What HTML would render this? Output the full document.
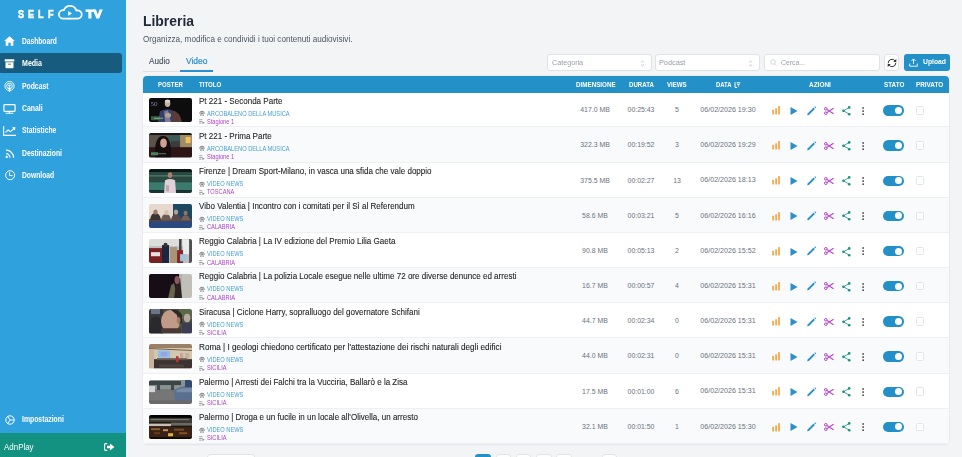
<!DOCTYPE html><html><head><meta charset="utf-8"><style>*{margin:0;padding:0;box-sizing:border-box}
html,body{width:962px;height:457px;overflow:hidden;background:#f3f4f6;font-family:"Liberation Sans",sans-serif;position:relative}
.abs{position:absolute}
.t{position:absolute;white-space:nowrap;line-height:1}
#side{position:absolute;left:0;top:0;width:125.8px;height:457px;background:#2fa1dd}
#foot{position:absolute;left:0;top:433.4px;width:125.8px;height:24px;background:#139282}
.mico{position:absolute;left:4.2px;line-height:0}.mico.w{left:3.3px}.mico.r{left:4.7px}.mico svg{display:block}
#act{position:absolute;left:0;top:53.4px;width:121.7px;height:20.1px;background:#175b7e;border-radius:1px 3px 3px 1px}
#tbl{position:absolute;left:143px;top:76px;width:806px;height:368px;background:#fff;border-radius:4px;box-shadow:0 0 0 0.6px #e3e6ea, 0 1px 2px rgba(0,0,0,0.06);overflow:hidden}
#thead{position:absolute;left:0;top:0;width:806px;height:16.7px;background:#2490c8}
#rows{position:absolute;left:0;top:16.3px;width:806px}
.row{position:absolute;left:0;width:806px;height:35.17px;border-bottom:0.7px solid #eef0f3}
.thumb{position:absolute;left:149.1px;width:43.1px;height:24.3px;border-radius:2px;overflow:hidden;line-height:0}.thumb svg{display:block}
.ic{position:absolute;line-height:0}.ic svg{display:block}
.tog{position:absolute;left:883.3px;width:20.6px;height:10.3px;border-radius:5.2px;background:#2490c8}
.tog i{position:absolute;left:11.6px;top:1.6px;width:7px;height:7px;border-radius:50%;background:#fff}
.chk{position:absolute;left:916.2px;width:7.7px;height:8.5px;border:0.8px solid #e2e5e9;border-radius:1.5px;background:#fff}
.sel{position:absolute;top:54.1px;height:16.5px;background:#fff;border:0.7px solid #dfe2e6;border-radius:3px}
</style></head><body><div id="side"><span class="t" style="left:17.7px;top:9.0px;font-size:11.4px;font-weight:700;color:#fff;transform:scaleX(0.8);transform-origin:0 0;-webkit-text-stroke:0.55px #fff">S</span><span class="t" style="left:28.1px;top:9.0px;font-size:11.4px;font-weight:700;color:#fff;transform:scaleX(0.8);transform-origin:0 0;-webkit-text-stroke:0.55px #fff">E</span><span class="t" style="left:38.2px;top:9.0px;font-size:11.4px;font-weight:700;color:#fff;transform:scaleX(0.8);transform-origin:0 0;-webkit-text-stroke:0.55px #fff">L</span><span class="t" style="left:48.1px;top:9.0px;font-size:11.4px;font-weight:700;color:#fff;transform:scaleX(0.8);transform-origin:0 0;-webkit-text-stroke:0.55px #fff">F</span><svg class="abs" style="left:57px;top:3px" width="27" height="19" viewBox="0 0 27 19"><path d="M20.5 15.6 H5.5 A4.3 4.3 0 1 1 6.9 7.1 A6.6 6.6 0 0 1 19.4 7.6 A4.1 4.1 0 1 1 20.5 15.6 Z" fill="none" stroke="#fff" stroke-width="1.7" stroke-linejoin="round"/><path d="M11.2 8.1 L15 10.4 L11.2 12.7Z" fill="#fff"/><path d="M11.6 14.2 L13.6 15.6 L11.6 17Z" fill="#fff"/></svg><span class="t" style="left:85.9px;top:9.1px;font-size:11.4px;font-weight:700;color:#fff;letter-spacing:-0.2px;transform:scaleX(1.12);transform-origin:0 0;-webkit-text-stroke:1px #fff">TV</span><div id="act"></div><span class="t" style="left:21.90px;top:36.80px;font-size:8.5px;font-weight:700;color:#fff;transform:scaleX(0.7837);transform-origin:0 0;">Dashboard</span><div class="mico" style="top:36.1px"><svg width="11" height="10" viewBox="0 0 11 10"><path d="M5.5 0.3 L10.8 5 L9.3 5 L9.3 9.7 L6.7 9.7 L6.7 6.8 L4.3 6.8 L4.3 9.7 L1.7 9.7 L1.7 5 L0.2 5Z" fill="#fff"/></svg></div><span class="t" style="left:21.90px;top:59.30px;font-size:8.5px;font-weight:700;color:#fff;transform:scaleX(0.8301);transform-origin:0 0;">Media</span><div class="mico" style="top:59.1px"><svg width="11" height="10" viewBox="0 0 11 10"><rect x="0.7" y="0.3" width="9.6" height="2.3" rx=".3" fill="#fff"/><path d="M1.5 3.3 H9.5 V8.6 Q9.5 9.2 8.9 9.2 H2.1 Q1.5 9.2 1.5 8.6Z" fill="#fff"/><rect x="4" y="4.7" width="3" height="0.9" rx=".3" fill="#175b7e"/></svg></div><span class="t" style="left:21.90px;top:81.50px;font-size:8.5px;font-weight:700;color:#fff;transform:scaleX(0.8011);transform-origin:0 0;">Podcast</span><div class="mico" style="top:80.5px"><svg width="11" height="11" viewBox="0 0 11 11"><circle cx="5.5" cy="5" r="4.6" fill="none" stroke="#fff" stroke-width="0.9"/><circle cx="5.5" cy="5" r="2.8" fill="none" stroke="#fff" stroke-width="0.9"/><circle cx="5.5" cy="4.6" r="1.2" fill="#fff"/><path d="M4.5 6.2 H6.5 L6.1 11 H4.9Z" fill="#fff"/></svg></div><span class="t" style="left:21.90px;top:103.90px;font-size:8.5px;font-weight:700;color:#fff;transform:scaleX(0.8073);transform-origin:0 0;">Canali</span><div class="mico w" style="top:103.6px"><svg width="13" height="10" viewBox="0 0 13 10"><rect x="0.9" y="0.7" width="11.2" height="6.6" rx=".8" fill="none" stroke="#fff" stroke-width="1.2"/><path d="M2.6 9.2 H10.4 M6.5 7.4 V9.2" stroke="#fff" stroke-width="1.1"/></svg></div><span class="t" style="left:21.90px;top:126.30px;font-size:8.5px;font-weight:700;color:#fff;transform:scaleX(0.8000);transform-origin:0 0;">Statistiche</span><div class="mico w" style="top:125.5px"><svg width="13" height="10" viewBox="0 0 13 10"><path d="M0.6 0 V9.3 H12.9" fill="none" stroke="#fff" stroke-width="1.15"/><path d="M2.5 6.3 L5.1 4 L7.5 5.6 L11 2.5" fill="none" stroke="#fff" stroke-width="1.1"/><path d="M8.9 1.4 L12.3 1.1 L12.1 4.5Z" fill="#fff"/></svg></div><span class="t" style="left:21.90px;top:148.60px;font-size:8.5px;font-weight:700;color:#fff;transform:scaleX(0.7970);transform-origin:0 0;">Destinazioni</span><div class="mico r" style="top:148.6px"><svg width="11" height="10" viewBox="0 0 11 10"><circle cx="1.7" cy="8" r="1.15" fill="#fff"/><path d="M1 4.7 A3.9 3.9 0 0 1 4.9 8.8 M1 1.2 A7.5 7.5 0 0 1 8.6 8.8" fill="none" stroke="#fff" stroke-width="1.25"/></svg></div><span class="t" style="left:21.90px;top:171.00px;font-size:8.5px;font-weight:700;color:#fff;transform:scaleX(0.7929);transform-origin:0 0;">Download</span><div class="mico r" style="top:169.9px"><svg width="11" height="11" viewBox="0 0 11 11"><circle cx="5.1" cy="5.2" r="4.5" fill="none" stroke="#fff" stroke-width="1"/><path d="M4.6 2.3 V5.6 H7.6" fill="none" stroke="#fff" stroke-width="1"/></svg></div><span class="t" style="left:21.90px;top:414.60px;font-size:8.5px;font-weight:700;color:#fff;transform:scaleX(0.8046);transform-origin:0 0;">Impostazioni</span><div class="mico" style="left:4.6px;top:414.5px"><svg width="11" height="11" viewBox="0 0 11 11"><circle cx="5" cy="5" r="4.2" fill="none" stroke="#fff" stroke-width="1"/><path d="M5 5 H9.2 M5 5 L2.9 1.4 M5 5 L2.9 8.6" stroke="#fff" stroke-width="0.9"/></svg></div></div><div id="foot"><span class="t" style="left:3.90px;top:9.99px;font-size:8.4px;font-weight:400;color:#fff;transform:scaleX(0.9486);transform-origin:0 0;">AdnPlay</span><svg class="abs" style="left:104px;top:10.1px" width="11" height="8" viewBox="0 0 11 8"><path d="M3.2 0.6 H1.4 Q0.6 0.6 0.6 1.4 V6.6 Q0.6 7.4 1.4 7.4 H3.2" fill="none" stroke="#fff" stroke-width="1.1"/><path d="M3 2.8 H6 V0.6 L10.4 4 L6 7.4 V5.2 H3Z" fill="#fff"/></svg></div><span class="t" style="left:142.90px;top:14.17px;font-size:14.8px;font-weight:700;color:#1f2937;transform:scaleX(0.9396);transform-origin:0 0;">Libreria</span><span class="t" style="left:143.00px;top:34.52px;font-size:8.6px;font-weight:400;color:#4b5563;transform:scaleX(0.9472);transform-origin:0 0;">Organizza, modifica e condividi i tuoi contenuti audiovisivi.</span><div class="abs" style="left:143px;top:71px;width:70px;height:0.7px;background:#dcdfe3"></div><span class="t" style="left:148.70px;top:56.69px;font-size:8.4px;font-weight:400;color:#4b5563;transform:scaleX(0.9710);transform-origin:0 0;-webkit-text-stroke:0.15px #4b5563">Audio</span><span class="t" style="left:185.80px;top:56.69px;font-size:8.4px;font-weight:400;color:#2a8fcc;transform:scaleX(1.0103);transform-origin:0 0;-webkit-text-stroke:0.2px #2a8fcc">Video</span><div class="abs" style="left:180px;top:70px;width:33px;height:2px;background:#2a8fcc"></div><div class="sel" style="left:547px;width:105px"><svg class="abs" style="left:92.3px;top:4.6px" width="5" height="7" viewBox="0 0 5 7"><path d="M1 2.4 L2.5 1 L4 2.4 M1 4.6 L2.5 6 L4 4.6" fill="none" stroke="#b0b4ba" stroke-width=".7"/></svg></div><span class="t" style="left:551.60px;top:58.82px;font-size:7.3px;font-weight:400;color:#9aa0a8;transform:scaleX(0.9829);transform-origin:0 0;">Categoria</span><div class="sel" style="left:655px;width:104.5px"><svg class="abs" style="left:92.3px;top:4.6px" width="5" height="7" viewBox="0 0 5 7"><path d="M1 2.4 L2.5 1 L4 2.4 M1 4.6 L2.5 6 L4 4.6" fill="none" stroke="#b0b4ba" stroke-width=".7"/></svg></div><span class="t" style="left:659.00px;top:58.82px;font-size:7.3px;font-weight:400;color:#9aa0a8;">Podcast</span><div class="sel" style="left:764px;width:115.5px"><svg class="abs" style="left:4.5px;top:4.3px" width="7" height="7" viewBox="0 0 7 7"><circle cx="3" cy="3" r="2.3" fill="none" stroke="#c0c4ca" stroke-width=".7"/><path d="M4.7 4.7 L6.5 6.5" stroke="#c0c4ca" stroke-width=".7"/></svg></div><span class="t" style="left:780.60px;top:58.82px;font-size:7.3px;font-weight:400;color:#9aa0a8;transform:scaleX(0.9394);transform-origin:0 0;">Cerca...</span><div class="sel" style="left:883.7px;width:15.6px"><svg class="abs" style="left:2.6px;top:3.4px" width="10" height="10" viewBox="0 0 10 10"><path d="M1.2 5 A3.8 3.8 0 0 1 8.1 2.9 M8.8 5 A3.8 3.8 0 0 1 1.9 7.1" fill="none" stroke="#333" stroke-width="1"/><path d="M9.3 1 L9.3 4.3 L6.3 3.7Z M0.7 9 L0.7 5.7 L3.7 6.3Z" fill="#333"/></svg></div><div class="abs" style="left:904px;top:54.4px;width:46px;height:16.4px;background:#2490c8;border-radius:3px"><svg class="abs" style="left:5px;top:3.6px" width="9" height="9" viewBox="0 0 9 9"><path d="M4.5 6 V1 M2.4 3 L4.5 0.9 L6.6 3 M0.7 5.6 V8.2 H8.3 V5.6" fill="none" stroke="#fff" stroke-width="0.9"/></svg></div><span class="t" style="left:922.70px;top:58.31px;font-size:7.2px;font-weight:700;color:#fff;transform:scaleX(0.9442);transform-origin:0 0;">Upload</span><div id="tbl"><div id="rows"><div class="row" style="top:0.00px;background:#ffffff"></div><div class="row" style="top:35.17px;background:#f8fafc"></div><div class="row" style="top:70.34px;background:#ffffff"></div><div class="row" style="top:105.51px;background:#f8fafc"></div><div class="row" style="top:140.68px;background:#ffffff"></div><div class="row" style="top:175.85px;background:#f8fafc"></div><div class="row" style="top:211.02px;background:#ffffff"></div><div class="row" style="top:246.19px;background:#f8fafc"></div><div class="row" style="top:281.36px;background:#ffffff"></div><div class="row" style="top:316.53px;background:#f8fafc"></div></div><div id="thead"></div></div><span class="t" style="left:158.30px;top:81.54px;font-size:6.8px;font-weight:700;color:#fff;transform:scaleX(0.8872);transform-origin:0 0;">POSTER</span><span class="t" style="left:198.80px;top:81.54px;font-size:6.8px;font-weight:700;color:#fff;transform:scaleX(0.8953);transform-origin:0 0;">TITOLO</span><span class="t" style="left:575.60px;top:81.54px;font-size:6.8px;font-weight:700;color:#fff;transform:scaleX(0.9196);transform-origin:0 0;">DIMENSIONE</span><span class="t" style="left:628.60px;top:81.54px;font-size:6.8px;font-weight:700;color:#fff;transform:scaleX(0.8957);transform-origin:0 0;">DURATA</span><span class="t" style="left:667.00px;top:81.54px;font-size:6.8px;font-weight:700;color:#fff;transform:scaleX(0.8993);transform-origin:0 0;">VIEWS</span><span class="t" style="left:715.50px;top:81.54px;font-size:6.8px;font-weight:700;color:#fff;transform:scaleX(0.8671);transform-origin:0 0;">DATA</span><span class="t" style="left:809.30px;top:81.54px;font-size:6.8px;font-weight:700;color:#fff;transform:scaleX(0.9502);transform-origin:0 0;">AZIONI</span><span class="t" style="left:884.10px;top:81.54px;font-size:6.8px;font-weight:700;color:#fff;transform:scaleX(0.9267);transform-origin:0 0;">STATO</span><span class="t" style="left:916.30px;top:81.54px;font-size:6.8px;font-weight:700;color:#fff;transform:scaleX(0.9349);transform-origin:0 0;">PRIVATO</span><svg class="abs" style="left:733.9px;top:81.9px" width="7" height="6" viewBox="0 0 7 6"><path d="M1 0.2 V5.4 H3.2 M2.6 0.8 H6.3 M3.2 2.4 H5.6 M3.8 4 H5" fill="none" stroke="#fff" stroke-width="1"/></svg><div class="thumb" style="top:98.20px"><svg width="43.1" height="24.3" viewBox="0 0 43 24" preserveAspectRatio="none"><defs><filter id="f0" x="0" y="0" width="1" height="1"><feGaussianBlur stdDeviation="0.5" edgeMode="duplicate"/></filter></defs><g filter="url(#f0)"><rect width="43" height="24" fill="#0a0810"/><text x="1.5" y="8" font-family="Liberation Serif" font-size="7" fill="#8a88a8">50</text><path d="M9 24 L11 13 Q17 10 23 12 L25 24Z" fill="#34406a"/><path d="M15 13 L19 12 L22 24 L16 24Z" fill="#7a7a9a"/><ellipse cx="18.5" cy="5.5" rx="2.8" ry="3.4" fill="#c8b0a0"/><ellipse cx="18.5" cy="3.2" rx="2.8" ry="1.6" fill="#dcd4cc"/><ellipse cx="19" cy="17" rx="3" ry="2.5" fill="#b8a090"/><path d="M23 12 Q31 13 33 24 L23 24Z" fill="#5a3a36"/><rect x="2" y="18" width="9" height="4" fill="#3a6a48" opacity=".9"/><rect x="5" y="19.5" width="9" height="1.2" fill="#b0c8b0" opacity=".6"/></g></svg></div><span class="t" style="left:198.70px;top:96.52px;font-size:8.6px;font-weight:400;color:#1f1f1f;transform:scaleX(0.9350);transform-origin:0 0;-webkit-text-stroke:0.1px #1f1f1f">Pt 221 - Seconda Parte</span><div class="ic" style="left:198.6px;top:110.20px"><svg width="6" height="6" viewBox="0 0 6 6"><path d="M0.4 3.4 A2.6 2.6 0 0 1 5.6 3.4 L5.6 4 L0.4 4Z" fill="#8c8c8c"/><circle cx="1.6" cy="3" r=".55" fill="#fff"/><circle cx="3" cy="2.2" r=".55" fill="#fff"/><circle cx="4.4" cy="3" r=".55" fill="#fff"/><circle cx="1.9" cy="5.1" r=".8" fill="#7a7a7a"/><circle cx="4.1" cy="5.1" r=".8" fill="#7a7a7a"/></svg></div><span class="t" style="left:206.70px;top:110.57px;font-size:6.3px;font-weight:400;color:#469fd4;transform:scaleX(0.9050);transform-origin:0 0;">ARCOBALENO DELLA MUSICA</span><div class="ic" style="left:198.8px;top:119.40px"><svg width="6" height="5" viewBox="0 0 6 5"><rect x="0.2" y="0.3" width="3.2" height="0.9" fill="#9a9a9a"/><rect x="0.2" y="2" width="3.2" height="0.9" fill="#9a9a9a"/><rect x="0.2" y="3.7" width="2.2" height="0.9" fill="#9a9a9a"/><path d="M3.4 2.4 L5.8 3.8 L3.4 5Z" fill="#8a8a8a"/></svg></div><span class="t" style="left:206.80px;top:118.91px;font-size:6.6px;font-weight:400;color:#b043c8;transform:scaleX(0.8600);transform-origin:0 0;">Stagione 1</span><span class="t" style="left:595.10px;top:106.18px;font-size:7.7px;font-weight:400;color:#6b7280;transform:translateX(-50%) scaleX(0.9000);transform-origin:50% 0;">417.0 MB</span><span class="t" style="left:640.70px;top:106.18px;font-size:7.7px;font-weight:400;color:#6b7280;transform:translateX(-50%) scaleX(0.9000);transform-origin:50% 0;">00:25:43</span><span class="t" style="left:676.80px;top:106.18px;font-size:7.7px;font-weight:400;color:#6b7280;transform:translateX(-50%) scaleX(0.9000);transform-origin:50% 0;">5</span><span class="t" style="left:727.50px;top:106.01px;font-size:7.9px;font-weight:400;color:#6b7280;transform:translateX(-50%) scaleX(0.9000);transform-origin:50% 0;">06/02/2026 19:30</span><div class="ic" style="left:772.4px;top:106.10px"><svg width="9" height="9" viewBox="0 0 9 9"><rect x="0.2" y="3.8" width="1.8" height="4.8" rx=".5" fill="#f6a94a"/><rect x="3.2" y="2.2" width="1.8" height="6.4" rx=".5" fill="#f6a94a"/><rect x="6.1" y="0.1" width="1.8" height="8.5" rx=".5" fill="#f6a94a"/></svg></div><div class="ic" style="left:790.2px;top:106.90px"><svg width="8" height="8" viewBox="0 0 8 8"><path d="M0.5 0 L7.5 4 L0.5 8Z" fill="#2a8fcc"/></svg></div><div class="ic" style="left:806.6px;top:105.60px"><svg width="10" height="10" viewBox="0 0 10 10"><path d="M0.2 9.3 L0.6 7.4 L6.6 1.6 L7.9 2.9 L1.9 8.9Z" fill="#2a8fcc"/><path d="M7.3 0.9 L8 0.3 L9.3 1.6 L8.6 2.3Z" fill="#2a8fcc"/></svg></div><div class="ic" style="left:823.8px;top:106.60px"><svg width="10" height="8" viewBox="0 0 10 8"><circle cx="1.8" cy="1.8" r="1.3" fill="none" stroke="#b03cc8" stroke-width="1"/><circle cx="1.8" cy="6.2" r="1.3" fill="none" stroke="#b03cc8" stroke-width="1"/><path d="M2.8 2.4 L9.5 6.8 M2.8 5.6 L9.5 1.2" stroke="#b03cc8" stroke-width="1.1"/></svg></div><div class="ic" style="left:841.7px;top:105.90px"><svg width="9" height="10" viewBox="0 0 9 10"><path d="M7.2 1.5 L1.5 4.8 L7.2 8.1" fill="none" stroke="#1a9080" stroke-width="0.8"/><circle cx="7.2" cy="1.4" r="1.3" fill="#1a9080"/><circle cx="1.4" cy="4.8" r="1.3" fill="#1a9080"/><circle cx="7.2" cy="8.2" r="1.3" fill="#1a9080"/></svg></div><div class="ic" style="left:862px;top:106.70px"><svg width="3" height="9" viewBox="0 0 3 9"><rect x="0.3" y="0.2" width="1.7" height="1.6" fill="#555"/><rect x="0.3" y="3.3" width="1.7" height="1.6" fill="#555"/><rect x="0.3" y="6.4" width="1.7" height="1.6" fill="#555"/></svg></div><div class="tog" style="top:105.30px"><i></i></div><div class="chk" style="top:106.10px"></div><div class="thumb" style="top:133.37px"><svg width="43.1" height="24.3" viewBox="0 0 43 24" preserveAspectRatio="none"><defs><filter id="f1" x="0" y="0" width="1" height="1"><feGaussianBlur stdDeviation="0.5" edgeMode="duplicate"/></filter></defs><g filter="url(#f1)"><rect width="43" height="24" fill="#1e1612"/><rect y="2" width="43" height="13" fill="#5a524a"/><rect x="20" y="2" width="12" height="13" fill="#3a5a54"/><rect x="31" y="2" width="12" height="13" fill="#a08a68"/><rect x="36.5" y="4" width="5" height="6" fill="#f0c060"/><rect x="22" y="8" width="9" height="8" fill="#3a3a3a"/><rect y="14" width="43" height="10" fill="#2e1814"/><path d="M6 24 Q5 3 14 3 Q23 3 22 24Z" fill="#120c0c"/><ellipse cx="14.5" cy="10" rx="3.3" ry="4.5" fill="#d0a090"/><rect x="2" y="19" width="7" height="3" fill="#4a8060"/><rect x="9" y="20" width="8" height="1" fill="#a0c0a0" opacity=".6"/></g></svg></div><span class="t" style="left:198.70px;top:131.69px;font-size:8.6px;font-weight:400;color:#1f1f1f;transform:scaleX(0.9350);transform-origin:0 0;-webkit-text-stroke:0.1px #1f1f1f">Pt 221 - Prima Parte</span><div class="ic" style="left:198.6px;top:145.37px"><svg width="6" height="6" viewBox="0 0 6 6"><path d="M0.4 3.4 A2.6 2.6 0 0 1 5.6 3.4 L5.6 4 L0.4 4Z" fill="#8c8c8c"/><circle cx="1.6" cy="3" r=".55" fill="#fff"/><circle cx="3" cy="2.2" r=".55" fill="#fff"/><circle cx="4.4" cy="3" r=".55" fill="#fff"/><circle cx="1.9" cy="5.1" r=".8" fill="#7a7a7a"/><circle cx="4.1" cy="5.1" r=".8" fill="#7a7a7a"/></svg></div><span class="t" style="left:206.70px;top:145.74px;font-size:6.3px;font-weight:400;color:#469fd4;transform:scaleX(0.9050);transform-origin:0 0;">ARCOBALENO DELLA MUSICA</span><div class="ic" style="left:198.8px;top:154.57px"><svg width="6" height="5" viewBox="0 0 6 5"><rect x="0.2" y="0.3" width="3.2" height="0.9" fill="#9a9a9a"/><rect x="0.2" y="2" width="3.2" height="0.9" fill="#9a9a9a"/><rect x="0.2" y="3.7" width="2.2" height="0.9" fill="#9a9a9a"/><path d="M3.4 2.4 L5.8 3.8 L3.4 5Z" fill="#8a8a8a"/></svg></div><span class="t" style="left:206.80px;top:154.08px;font-size:6.6px;font-weight:400;color:#b043c8;transform:scaleX(0.8600);transform-origin:0 0;">Stagione 1</span><span class="t" style="left:595.10px;top:141.35px;font-size:7.7px;font-weight:400;color:#6b7280;transform:translateX(-50%) scaleX(0.9000);transform-origin:50% 0;">322.3 MB</span><span class="t" style="left:640.70px;top:141.35px;font-size:7.7px;font-weight:400;color:#6b7280;transform:translateX(-50%) scaleX(0.9000);transform-origin:50% 0;">00:19:52</span><span class="t" style="left:676.80px;top:141.35px;font-size:7.7px;font-weight:400;color:#6b7280;transform:translateX(-50%) scaleX(0.9000);transform-origin:50% 0;">3</span><span class="t" style="left:727.50px;top:141.18px;font-size:7.9px;font-weight:400;color:#6b7280;transform:translateX(-50%) scaleX(0.9000);transform-origin:50% 0;">06/02/2026 19:29</span><div class="ic" style="left:772.4px;top:141.27px"><svg width="9" height="9" viewBox="0 0 9 9"><rect x="0.2" y="3.8" width="1.8" height="4.8" rx=".5" fill="#f6a94a"/><rect x="3.2" y="2.2" width="1.8" height="6.4" rx=".5" fill="#f6a94a"/><rect x="6.1" y="0.1" width="1.8" height="8.5" rx=".5" fill="#f6a94a"/></svg></div><div class="ic" style="left:790.2px;top:142.07px"><svg width="8" height="8" viewBox="0 0 8 8"><path d="M0.5 0 L7.5 4 L0.5 8Z" fill="#2a8fcc"/></svg></div><div class="ic" style="left:806.6px;top:140.77px"><svg width="10" height="10" viewBox="0 0 10 10"><path d="M0.2 9.3 L0.6 7.4 L6.6 1.6 L7.9 2.9 L1.9 8.9Z" fill="#2a8fcc"/><path d="M7.3 0.9 L8 0.3 L9.3 1.6 L8.6 2.3Z" fill="#2a8fcc"/></svg></div><div class="ic" style="left:823.8px;top:141.77px"><svg width="10" height="8" viewBox="0 0 10 8"><circle cx="1.8" cy="1.8" r="1.3" fill="none" stroke="#b03cc8" stroke-width="1"/><circle cx="1.8" cy="6.2" r="1.3" fill="none" stroke="#b03cc8" stroke-width="1"/><path d="M2.8 2.4 L9.5 6.8 M2.8 5.6 L9.5 1.2" stroke="#b03cc8" stroke-width="1.1"/></svg></div><div class="ic" style="left:841.7px;top:141.07px"><svg width="9" height="10" viewBox="0 0 9 10"><path d="M7.2 1.5 L1.5 4.8 L7.2 8.1" fill="none" stroke="#1a9080" stroke-width="0.8"/><circle cx="7.2" cy="1.4" r="1.3" fill="#1a9080"/><circle cx="1.4" cy="4.8" r="1.3" fill="#1a9080"/><circle cx="7.2" cy="8.2" r="1.3" fill="#1a9080"/></svg></div><div class="ic" style="left:862px;top:141.87px"><svg width="3" height="9" viewBox="0 0 3 9"><rect x="0.3" y="0.2" width="1.7" height="1.6" fill="#555"/><rect x="0.3" y="3.3" width="1.7" height="1.6" fill="#555"/><rect x="0.3" y="6.4" width="1.7" height="1.6" fill="#555"/></svg></div><div class="tog" style="top:140.47px"><i></i></div><div class="chk" style="top:141.27px"></div><div class="thumb" style="top:168.54px"><svg width="43.1" height="24.3" viewBox="0 0 43 24" preserveAspectRatio="none"><defs><filter id="f2" x="0" y="0" width="1" height="1"><feGaussianBlur stdDeviation="0.5" edgeMode="duplicate"/></filter></defs><g filter="url(#f2)"><rect width="43" height="24" fill="#0e1814"/><rect y="3" width="43" height="10" fill="#2a4a40"/><rect y="6" width="43" height="1.5" fill="#6a8a80" opacity=".6"/><rect y="13" width="43" height="8" fill="#3a7a6c"/><rect y="21" width="43" height="3" fill="#1a3430"/><ellipse cx="21" cy="6" rx="2.3" ry="2.9" fill="#a88070"/><path d="M15 24 L16 11 Q21 9 26 11 L27 24Z" fill="#e0d0d8"/><rect x="17" y="16" width="3" height="6" fill="#a07a80" opacity=".5"/></g></svg></div><span class="t" style="left:198.70px;top:166.86px;font-size:8.6px;font-weight:400;color:#1f1f1f;transform:scaleX(0.9350);transform-origin:0 0;-webkit-text-stroke:0.1px #1f1f1f">Firenze | Dream Sport-Milano, in vasca una sfida che vale doppio</span><div class="ic" style="left:198.6px;top:180.54px"><svg width="6" height="6" viewBox="0 0 6 6"><path d="M0.4 3.4 A2.6 2.6 0 0 1 5.6 3.4 L5.6 4 L0.4 4Z" fill="#8c8c8c"/><circle cx="1.6" cy="3" r=".55" fill="#fff"/><circle cx="3" cy="2.2" r=".55" fill="#fff"/><circle cx="4.4" cy="3" r=".55" fill="#fff"/><circle cx="1.9" cy="5.1" r=".8" fill="#7a7a7a"/><circle cx="4.1" cy="5.1" r=".8" fill="#7a7a7a"/></svg></div><span class="t" style="left:206.70px;top:180.91px;font-size:6.3px;font-weight:400;color:#469fd4;transform:scaleX(0.9050);transform-origin:0 0;">VIDEO NEWS</span><div class="ic" style="left:198.8px;top:189.74px"><svg width="6" height="5" viewBox="0 0 6 5"><rect x="0.2" y="0.3" width="3.2" height="0.9" fill="#9a9a9a"/><rect x="0.2" y="2" width="3.2" height="0.9" fill="#9a9a9a"/><rect x="0.2" y="3.7" width="2.2" height="0.9" fill="#9a9a9a"/><path d="M3.4 2.4 L5.8 3.8 L3.4 5Z" fill="#8a8a8a"/></svg></div><span class="t" style="left:206.80px;top:189.25px;font-size:6.6px;font-weight:400;color:#b043c8;transform:scaleX(0.8600);transform-origin:0 0;">TOSCANA</span><span class="t" style="left:595.10px;top:176.52px;font-size:7.7px;font-weight:400;color:#6b7280;transform:translateX(-50%) scaleX(0.9000);transform-origin:50% 0;">375.5 MB</span><span class="t" style="left:640.70px;top:176.52px;font-size:7.7px;font-weight:400;color:#6b7280;transform:translateX(-50%) scaleX(0.9000);transform-origin:50% 0;">00:02:27</span><span class="t" style="left:676.80px;top:176.52px;font-size:7.7px;font-weight:400;color:#6b7280;transform:translateX(-50%) scaleX(0.9000);transform-origin:50% 0;">13</span><span class="t" style="left:727.50px;top:176.35px;font-size:7.9px;font-weight:400;color:#6b7280;transform:translateX(-50%) scaleX(0.9000);transform-origin:50% 0;">06/02/2026 18:13</span><div class="ic" style="left:772.4px;top:176.44px"><svg width="9" height="9" viewBox="0 0 9 9"><rect x="0.2" y="3.8" width="1.8" height="4.8" rx=".5" fill="#f6a94a"/><rect x="3.2" y="2.2" width="1.8" height="6.4" rx=".5" fill="#f6a94a"/><rect x="6.1" y="0.1" width="1.8" height="8.5" rx=".5" fill="#f6a94a"/></svg></div><div class="ic" style="left:790.2px;top:177.24px"><svg width="8" height="8" viewBox="0 0 8 8"><path d="M0.5 0 L7.5 4 L0.5 8Z" fill="#2a8fcc"/></svg></div><div class="ic" style="left:806.6px;top:175.94px"><svg width="10" height="10" viewBox="0 0 10 10"><path d="M0.2 9.3 L0.6 7.4 L6.6 1.6 L7.9 2.9 L1.9 8.9Z" fill="#2a8fcc"/><path d="M7.3 0.9 L8 0.3 L9.3 1.6 L8.6 2.3Z" fill="#2a8fcc"/></svg></div><div class="ic" style="left:823.8px;top:176.94px"><svg width="10" height="8" viewBox="0 0 10 8"><circle cx="1.8" cy="1.8" r="1.3" fill="none" stroke="#b03cc8" stroke-width="1"/><circle cx="1.8" cy="6.2" r="1.3" fill="none" stroke="#b03cc8" stroke-width="1"/><path d="M2.8 2.4 L9.5 6.8 M2.8 5.6 L9.5 1.2" stroke="#b03cc8" stroke-width="1.1"/></svg></div><div class="ic" style="left:841.7px;top:176.24px"><svg width="9" height="10" viewBox="0 0 9 10"><path d="M7.2 1.5 L1.5 4.8 L7.2 8.1" fill="none" stroke="#1a9080" stroke-width="0.8"/><circle cx="7.2" cy="1.4" r="1.3" fill="#1a9080"/><circle cx="1.4" cy="4.8" r="1.3" fill="#1a9080"/><circle cx="7.2" cy="8.2" r="1.3" fill="#1a9080"/></svg></div><div class="ic" style="left:862px;top:177.04px"><svg width="3" height="9" viewBox="0 0 3 9"><rect x="0.3" y="0.2" width="1.7" height="1.6" fill="#555"/><rect x="0.3" y="3.3" width="1.7" height="1.6" fill="#555"/><rect x="0.3" y="6.4" width="1.7" height="1.6" fill="#555"/></svg></div><div class="tog" style="top:175.64px"><i></i></div><div class="chk" style="top:176.44px"></div><div class="thumb" style="top:203.71px"><svg width="43.1" height="24.3" viewBox="0 0 43 24" preserveAspectRatio="none"><defs><filter id="f3" x="0" y="0" width="1" height="1"><feGaussianBlur stdDeviation="0.5" edgeMode="duplicate"/></filter></defs><g filter="url(#f3)"><rect width="43" height="24" fill="#e6d8cc"/><rect x="24" width="19" height="16" fill="#1a4860"/><rect y="16" width="43" height="8" fill="#2a4a80"/><rect y="15" width="43" height="2" fill="#6a4a3a"/><path d="M1 16 Q2 9 6 9 Q11 9 12 16Z" fill="#3a3030"/><ellipse cx="6.5" cy="8" rx="2.2" ry="2.6" fill="#9a7a6a"/><path d="M12 16 Q13 10 17 10 Q21 10 22 16Z" fill="#6a5a50"/><ellipse cx="17.5" cy="8.5" rx="2.2" ry="2.6" fill="#d8c0b0"/><path d="M22 16 Q23 10 27 10 Q31 10 32 16Z" fill="#5a4a48"/><ellipse cx="27" cy="8" rx="2.2" ry="2.6" fill="#b0a098"/><path d="M32 16 Q33 11 36.5 11 Q40 11 41 16Z" fill="#7a6058"/><ellipse cx="36.5" cy="9" rx="2" ry="2.4" fill="#9a7060"/></g></svg></div><span class="t" style="left:198.70px;top:202.03px;font-size:8.6px;font-weight:400;color:#1f1f1f;transform:scaleX(0.9350);transform-origin:0 0;-webkit-text-stroke:0.1px #1f1f1f">Vibo Valentia | Incontro con i comitati per il Sì al Referendum</span><div class="ic" style="left:198.6px;top:215.71px"><svg width="6" height="6" viewBox="0 0 6 6"><path d="M0.4 3.4 A2.6 2.6 0 0 1 5.6 3.4 L5.6 4 L0.4 4Z" fill="#8c8c8c"/><circle cx="1.6" cy="3" r=".55" fill="#fff"/><circle cx="3" cy="2.2" r=".55" fill="#fff"/><circle cx="4.4" cy="3" r=".55" fill="#fff"/><circle cx="1.9" cy="5.1" r=".8" fill="#7a7a7a"/><circle cx="4.1" cy="5.1" r=".8" fill="#7a7a7a"/></svg></div><span class="t" style="left:206.70px;top:216.08px;font-size:6.3px;font-weight:400;color:#469fd4;transform:scaleX(0.9050);transform-origin:0 0;">VIDEO NEWS</span><div class="ic" style="left:198.8px;top:224.91px"><svg width="6" height="5" viewBox="0 0 6 5"><rect x="0.2" y="0.3" width="3.2" height="0.9" fill="#9a9a9a"/><rect x="0.2" y="2" width="3.2" height="0.9" fill="#9a9a9a"/><rect x="0.2" y="3.7" width="2.2" height="0.9" fill="#9a9a9a"/><path d="M3.4 2.4 L5.8 3.8 L3.4 5Z" fill="#8a8a8a"/></svg></div><span class="t" style="left:206.80px;top:224.42px;font-size:6.6px;font-weight:400;color:#b043c8;transform:scaleX(0.8600);transform-origin:0 0;">CALABRIA</span><span class="t" style="left:595.10px;top:211.69px;font-size:7.7px;font-weight:400;color:#6b7280;transform:translateX(-50%) scaleX(0.9000);transform-origin:50% 0;">58.6 MB</span><span class="t" style="left:640.70px;top:211.69px;font-size:7.7px;font-weight:400;color:#6b7280;transform:translateX(-50%) scaleX(0.9000);transform-origin:50% 0;">00:03:21</span><span class="t" style="left:676.80px;top:211.69px;font-size:7.7px;font-weight:400;color:#6b7280;transform:translateX(-50%) scaleX(0.9000);transform-origin:50% 0;">5</span><span class="t" style="left:727.50px;top:211.52px;font-size:7.9px;font-weight:400;color:#6b7280;transform:translateX(-50%) scaleX(0.9000);transform-origin:50% 0;">06/02/2026 16:16</span><div class="ic" style="left:772.4px;top:211.61px"><svg width="9" height="9" viewBox="0 0 9 9"><rect x="0.2" y="3.8" width="1.8" height="4.8" rx=".5" fill="#f6a94a"/><rect x="3.2" y="2.2" width="1.8" height="6.4" rx=".5" fill="#f6a94a"/><rect x="6.1" y="0.1" width="1.8" height="8.5" rx=".5" fill="#f6a94a"/></svg></div><div class="ic" style="left:790.2px;top:212.41px"><svg width="8" height="8" viewBox="0 0 8 8"><path d="M0.5 0 L7.5 4 L0.5 8Z" fill="#2a8fcc"/></svg></div><div class="ic" style="left:806.6px;top:211.11px"><svg width="10" height="10" viewBox="0 0 10 10"><path d="M0.2 9.3 L0.6 7.4 L6.6 1.6 L7.9 2.9 L1.9 8.9Z" fill="#2a8fcc"/><path d="M7.3 0.9 L8 0.3 L9.3 1.6 L8.6 2.3Z" fill="#2a8fcc"/></svg></div><div class="ic" style="left:823.8px;top:212.11px"><svg width="10" height="8" viewBox="0 0 10 8"><circle cx="1.8" cy="1.8" r="1.3" fill="none" stroke="#b03cc8" stroke-width="1"/><circle cx="1.8" cy="6.2" r="1.3" fill="none" stroke="#b03cc8" stroke-width="1"/><path d="M2.8 2.4 L9.5 6.8 M2.8 5.6 L9.5 1.2" stroke="#b03cc8" stroke-width="1.1"/></svg></div><div class="ic" style="left:841.7px;top:211.41px"><svg width="9" height="10" viewBox="0 0 9 10"><path d="M7.2 1.5 L1.5 4.8 L7.2 8.1" fill="none" stroke="#1a9080" stroke-width="0.8"/><circle cx="7.2" cy="1.4" r="1.3" fill="#1a9080"/><circle cx="1.4" cy="4.8" r="1.3" fill="#1a9080"/><circle cx="7.2" cy="8.2" r="1.3" fill="#1a9080"/></svg></div><div class="ic" style="left:862px;top:212.21px"><svg width="3" height="9" viewBox="0 0 3 9"><rect x="0.3" y="0.2" width="1.7" height="1.6" fill="#555"/><rect x="0.3" y="3.3" width="1.7" height="1.6" fill="#555"/><rect x="0.3" y="6.4" width="1.7" height="1.6" fill="#555"/></svg></div><div class="tog" style="top:210.81px"><i></i></div><div class="chk" style="top:211.61px"></div><div class="thumb" style="top:238.88px"><svg width="43.1" height="24.3" viewBox="0 0 43 24" preserveAspectRatio="none"><defs><filter id="f4" x="0" y="0" width="1" height="1"><feGaussianBlur stdDeviation="0.5" edgeMode="duplicate"/></filter></defs><g filter="url(#f4)"><rect width="43" height="24" fill="#c0c0c0"/><rect width="43" height="7" fill="#dcdedc"/><rect x="30" y="0" width="2.5" height="24" fill="#404040"/><rect x="34" y="1" width="8" height="14" fill="#e8ecea"/><rect x="40" y="0" width="3" height="24" fill="#505050"/><rect y="9" width="14" height="15" fill="#7a2024"/><rect x="2" y="13" width="9" height="4" fill="#e8e0e0"/><rect x="22" y="11" width="12" height="13" fill="#8a2828"/><rect x="13" y="6" width="7" height="18" fill="#1a2640"/><ellipse cx="16.5" cy="6" rx="2" ry="2.4" fill="#3a3030"/><rect x="21" y="8" width="7" height="16" fill="#a89478"/><rect x="31" y="15" width="6" height="7" fill="#a0c4dc"/></g></svg></div><span class="t" style="left:198.70px;top:237.20px;font-size:8.6px;font-weight:400;color:#1f1f1f;transform:scaleX(0.9350);transform-origin:0 0;-webkit-text-stroke:0.1px #1f1f1f">Reggio Calabria | La IV edizione del Premio Lilia Gaeta</span><div class="ic" style="left:198.6px;top:250.88px"><svg width="6" height="6" viewBox="0 0 6 6"><path d="M0.4 3.4 A2.6 2.6 0 0 1 5.6 3.4 L5.6 4 L0.4 4Z" fill="#8c8c8c"/><circle cx="1.6" cy="3" r=".55" fill="#fff"/><circle cx="3" cy="2.2" r=".55" fill="#fff"/><circle cx="4.4" cy="3" r=".55" fill="#fff"/><circle cx="1.9" cy="5.1" r=".8" fill="#7a7a7a"/><circle cx="4.1" cy="5.1" r=".8" fill="#7a7a7a"/></svg></div><span class="t" style="left:206.70px;top:251.25px;font-size:6.3px;font-weight:400;color:#469fd4;transform:scaleX(0.9050);transform-origin:0 0;">VIDEO NEWS</span><div class="ic" style="left:198.8px;top:260.08px"><svg width="6" height="5" viewBox="0 0 6 5"><rect x="0.2" y="0.3" width="3.2" height="0.9" fill="#9a9a9a"/><rect x="0.2" y="2" width="3.2" height="0.9" fill="#9a9a9a"/><rect x="0.2" y="3.7" width="2.2" height="0.9" fill="#9a9a9a"/><path d="M3.4 2.4 L5.8 3.8 L3.4 5Z" fill="#8a8a8a"/></svg></div><span class="t" style="left:206.80px;top:259.59px;font-size:6.6px;font-weight:400;color:#b043c8;transform:scaleX(0.8600);transform-origin:0 0;">CALABRIA</span><span class="t" style="left:595.10px;top:246.86px;font-size:7.7px;font-weight:400;color:#6b7280;transform:translateX(-50%) scaleX(0.9000);transform-origin:50% 0;">90.8 MB</span><span class="t" style="left:640.70px;top:246.86px;font-size:7.7px;font-weight:400;color:#6b7280;transform:translateX(-50%) scaleX(0.9000);transform-origin:50% 0;">00:05:13</span><span class="t" style="left:676.80px;top:246.86px;font-size:7.7px;font-weight:400;color:#6b7280;transform:translateX(-50%) scaleX(0.9000);transform-origin:50% 0;">2</span><span class="t" style="left:727.50px;top:246.69px;font-size:7.9px;font-weight:400;color:#6b7280;transform:translateX(-50%) scaleX(0.9000);transform-origin:50% 0;">06/02/2026 15:52</span><div class="ic" style="left:772.4px;top:246.78px"><svg width="9" height="9" viewBox="0 0 9 9"><rect x="0.2" y="3.8" width="1.8" height="4.8" rx=".5" fill="#f6a94a"/><rect x="3.2" y="2.2" width="1.8" height="6.4" rx=".5" fill="#f6a94a"/><rect x="6.1" y="0.1" width="1.8" height="8.5" rx=".5" fill="#f6a94a"/></svg></div><div class="ic" style="left:790.2px;top:247.58px"><svg width="8" height="8" viewBox="0 0 8 8"><path d="M0.5 0 L7.5 4 L0.5 8Z" fill="#2a8fcc"/></svg></div><div class="ic" style="left:806.6px;top:246.28px"><svg width="10" height="10" viewBox="0 0 10 10"><path d="M0.2 9.3 L0.6 7.4 L6.6 1.6 L7.9 2.9 L1.9 8.9Z" fill="#2a8fcc"/><path d="M7.3 0.9 L8 0.3 L9.3 1.6 L8.6 2.3Z" fill="#2a8fcc"/></svg></div><div class="ic" style="left:823.8px;top:247.28px"><svg width="10" height="8" viewBox="0 0 10 8"><circle cx="1.8" cy="1.8" r="1.3" fill="none" stroke="#b03cc8" stroke-width="1"/><circle cx="1.8" cy="6.2" r="1.3" fill="none" stroke="#b03cc8" stroke-width="1"/><path d="M2.8 2.4 L9.5 6.8 M2.8 5.6 L9.5 1.2" stroke="#b03cc8" stroke-width="1.1"/></svg></div><div class="ic" style="left:841.7px;top:246.58px"><svg width="9" height="10" viewBox="0 0 9 10"><path d="M7.2 1.5 L1.5 4.8 L7.2 8.1" fill="none" stroke="#1a9080" stroke-width="0.8"/><circle cx="7.2" cy="1.4" r="1.3" fill="#1a9080"/><circle cx="1.4" cy="4.8" r="1.3" fill="#1a9080"/><circle cx="7.2" cy="8.2" r="1.3" fill="#1a9080"/></svg></div><div class="ic" style="left:862px;top:247.38px"><svg width="3" height="9" viewBox="0 0 3 9"><rect x="0.3" y="0.2" width="1.7" height="1.6" fill="#555"/><rect x="0.3" y="3.3" width="1.7" height="1.6" fill="#555"/><rect x="0.3" y="6.4" width="1.7" height="1.6" fill="#555"/></svg></div><div class="tog" style="top:245.98px"><i></i></div><div class="chk" style="top:246.78px"></div><div class="thumb" style="top:274.05px"><svg width="43.1" height="24.3" viewBox="0 0 43 24" preserveAspectRatio="none"><defs><filter id="f5" x="0" y="0" width="1" height="1"><feGaussianBlur stdDeviation="0.5" edgeMode="duplicate"/></filter></defs><g filter="url(#f5)"><rect width="43" height="24" fill="#121018"/><rect x="30" width="13" height="24" fill="#b4b4ac"/><rect x="33" width="10" height="24" fill="#c8c8c0" opacity=".6"/><path d="M19 24 L22 11 L25 9 L29 24Z" fill="#6a6450"/><path d="M25 24 L27 8 L31 4 L33 24Z" fill="#2a2420"/><ellipse cx="28" cy="6" rx="2.5" ry="4" fill="#8a5a60"/></g></svg></div><span class="t" style="left:198.70px;top:272.37px;font-size:8.6px;font-weight:400;color:#1f1f1f;transform:scaleX(0.9350);transform-origin:0 0;-webkit-text-stroke:0.1px #1f1f1f">Reggio Calabria | La polizia Locale esegue nelle ultime 72 ore diverse denunce ed arresti</span><div class="ic" style="left:198.6px;top:286.05px"><svg width="6" height="6" viewBox="0 0 6 6"><path d="M0.4 3.4 A2.6 2.6 0 0 1 5.6 3.4 L5.6 4 L0.4 4Z" fill="#8c8c8c"/><circle cx="1.6" cy="3" r=".55" fill="#fff"/><circle cx="3" cy="2.2" r=".55" fill="#fff"/><circle cx="4.4" cy="3" r=".55" fill="#fff"/><circle cx="1.9" cy="5.1" r=".8" fill="#7a7a7a"/><circle cx="4.1" cy="5.1" r=".8" fill="#7a7a7a"/></svg></div><span class="t" style="left:206.70px;top:286.42px;font-size:6.3px;font-weight:400;color:#469fd4;transform:scaleX(0.9050);transform-origin:0 0;">VIDEO NEWS</span><div class="ic" style="left:198.8px;top:295.25px"><svg width="6" height="5" viewBox="0 0 6 5"><rect x="0.2" y="0.3" width="3.2" height="0.9" fill="#9a9a9a"/><rect x="0.2" y="2" width="3.2" height="0.9" fill="#9a9a9a"/><rect x="0.2" y="3.7" width="2.2" height="0.9" fill="#9a9a9a"/><path d="M3.4 2.4 L5.8 3.8 L3.4 5Z" fill="#8a8a8a"/></svg></div><span class="t" style="left:206.80px;top:294.76px;font-size:6.6px;font-weight:400;color:#b043c8;transform:scaleX(0.8600);transform-origin:0 0;">CALABRIA</span><span class="t" style="left:595.10px;top:282.03px;font-size:7.7px;font-weight:400;color:#6b7280;transform:translateX(-50%) scaleX(0.9000);transform-origin:50% 0;">16.7 MB</span><span class="t" style="left:640.70px;top:282.03px;font-size:7.7px;font-weight:400;color:#6b7280;transform:translateX(-50%) scaleX(0.9000);transform-origin:50% 0;">00:00:57</span><span class="t" style="left:676.80px;top:282.03px;font-size:7.7px;font-weight:400;color:#6b7280;transform:translateX(-50%) scaleX(0.9000);transform-origin:50% 0;">4</span><span class="t" style="left:727.50px;top:281.86px;font-size:7.9px;font-weight:400;color:#6b7280;transform:translateX(-50%) scaleX(0.9000);transform-origin:50% 0;">06/02/2026 15:31</span><div class="ic" style="left:772.4px;top:281.95px"><svg width="9" height="9" viewBox="0 0 9 9"><rect x="0.2" y="3.8" width="1.8" height="4.8" rx=".5" fill="#f6a94a"/><rect x="3.2" y="2.2" width="1.8" height="6.4" rx=".5" fill="#f6a94a"/><rect x="6.1" y="0.1" width="1.8" height="8.5" rx=".5" fill="#f6a94a"/></svg></div><div class="ic" style="left:790.2px;top:282.75px"><svg width="8" height="8" viewBox="0 0 8 8"><path d="M0.5 0 L7.5 4 L0.5 8Z" fill="#2a8fcc"/></svg></div><div class="ic" style="left:806.6px;top:281.45px"><svg width="10" height="10" viewBox="0 0 10 10"><path d="M0.2 9.3 L0.6 7.4 L6.6 1.6 L7.9 2.9 L1.9 8.9Z" fill="#2a8fcc"/><path d="M7.3 0.9 L8 0.3 L9.3 1.6 L8.6 2.3Z" fill="#2a8fcc"/></svg></div><div class="ic" style="left:823.8px;top:282.45px"><svg width="10" height="8" viewBox="0 0 10 8"><circle cx="1.8" cy="1.8" r="1.3" fill="none" stroke="#b03cc8" stroke-width="1"/><circle cx="1.8" cy="6.2" r="1.3" fill="none" stroke="#b03cc8" stroke-width="1"/><path d="M2.8 2.4 L9.5 6.8 M2.8 5.6 L9.5 1.2" stroke="#b03cc8" stroke-width="1.1"/></svg></div><div class="ic" style="left:841.7px;top:281.75px"><svg width="9" height="10" viewBox="0 0 9 10"><path d="M7.2 1.5 L1.5 4.8 L7.2 8.1" fill="none" stroke="#1a9080" stroke-width="0.8"/><circle cx="7.2" cy="1.4" r="1.3" fill="#1a9080"/><circle cx="1.4" cy="4.8" r="1.3" fill="#1a9080"/><circle cx="7.2" cy="8.2" r="1.3" fill="#1a9080"/></svg></div><div class="ic" style="left:862px;top:282.55px"><svg width="3" height="9" viewBox="0 0 3 9"><rect x="0.3" y="0.2" width="1.7" height="1.6" fill="#555"/><rect x="0.3" y="3.3" width="1.7" height="1.6" fill="#555"/><rect x="0.3" y="6.4" width="1.7" height="1.6" fill="#555"/></svg></div><div class="tog" style="top:281.15px"><i></i></div><div class="chk" style="top:281.95px"></div><div class="thumb" style="top:309.22px"><svg width="43.1" height="24.3" viewBox="0 0 43 24" preserveAspectRatio="none"><defs><filter id="f6" x="0" y="0" width="1" height="1"><feGaussianBlur stdDeviation="0.5" edgeMode="duplicate"/></filter></defs><g filter="url(#f6)"><rect width="43" height="24" fill="#4a5040"/><rect x="0" width="14" height="24" fill="#34343a"/><rect x="2" y="0" width="9" height="5" fill="#6a7488"/><path d="M0 24 L2 10 Q6 6 11 9 L14 24Z" fill="#2a2a2e"/><rect x="30" width="13" height="10" fill="#5a6a4a"/><ellipse cx="21.5" cy="12" rx="9.5" ry="11" fill="#c29a88"/><path d="M22 1 Q30 0 33 6 L33 14 L29 14 L28 6Z" fill="#2e2a28"/><ellipse cx="29.5" cy="11" rx="1.8" ry="3" fill="#a87868"/><rect x="12" y="19" width="20" height="5" fill="#4a3834"/><ellipse cx="38" cy="9" rx="3.2" ry="4.2" fill="#b8a8a4"/><rect x="33" y="14" width="10" height="10" fill="#3a3e52"/></g></svg></div><span class="t" style="left:198.70px;top:307.54px;font-size:8.6px;font-weight:400;color:#1f1f1f;transform:scaleX(0.9350);transform-origin:0 0;-webkit-text-stroke:0.1px #1f1f1f">Siracusa | Ciclone Harry, sopralluogo del governatore Schifani</span><div class="ic" style="left:198.6px;top:321.22px"><svg width="6" height="6" viewBox="0 0 6 6"><path d="M0.4 3.4 A2.6 2.6 0 0 1 5.6 3.4 L5.6 4 L0.4 4Z" fill="#8c8c8c"/><circle cx="1.6" cy="3" r=".55" fill="#fff"/><circle cx="3" cy="2.2" r=".55" fill="#fff"/><circle cx="4.4" cy="3" r=".55" fill="#fff"/><circle cx="1.9" cy="5.1" r=".8" fill="#7a7a7a"/><circle cx="4.1" cy="5.1" r=".8" fill="#7a7a7a"/></svg></div><span class="t" style="left:206.70px;top:321.59px;font-size:6.3px;font-weight:400;color:#469fd4;transform:scaleX(0.9050);transform-origin:0 0;">VIDEO NEWS</span><div class="ic" style="left:198.8px;top:330.42px"><svg width="6" height="5" viewBox="0 0 6 5"><rect x="0.2" y="0.3" width="3.2" height="0.9" fill="#9a9a9a"/><rect x="0.2" y="2" width="3.2" height="0.9" fill="#9a9a9a"/><rect x="0.2" y="3.7" width="2.2" height="0.9" fill="#9a9a9a"/><path d="M3.4 2.4 L5.8 3.8 L3.4 5Z" fill="#8a8a8a"/></svg></div><span class="t" style="left:206.80px;top:329.93px;font-size:6.6px;font-weight:400;color:#b043c8;transform:scaleX(0.8600);transform-origin:0 0;">SICILIA</span><span class="t" style="left:595.10px;top:317.20px;font-size:7.7px;font-weight:400;color:#6b7280;transform:translateX(-50%) scaleX(0.9000);transform-origin:50% 0;">44.7 MB</span><span class="t" style="left:640.70px;top:317.20px;font-size:7.7px;font-weight:400;color:#6b7280;transform:translateX(-50%) scaleX(0.9000);transform-origin:50% 0;">00:02:34</span><span class="t" style="left:676.80px;top:317.20px;font-size:7.7px;font-weight:400;color:#6b7280;transform:translateX(-50%) scaleX(0.9000);transform-origin:50% 0;">0</span><span class="t" style="left:727.50px;top:317.03px;font-size:7.9px;font-weight:400;color:#6b7280;transform:translateX(-50%) scaleX(0.9000);transform-origin:50% 0;">06/02/2026 15:31</span><div class="ic" style="left:772.4px;top:317.12px"><svg width="9" height="9" viewBox="0 0 9 9"><rect x="0.2" y="3.8" width="1.8" height="4.8" rx=".5" fill="#f6a94a"/><rect x="3.2" y="2.2" width="1.8" height="6.4" rx=".5" fill="#f6a94a"/><rect x="6.1" y="0.1" width="1.8" height="8.5" rx=".5" fill="#f6a94a"/></svg></div><div class="ic" style="left:790.2px;top:317.92px"><svg width="8" height="8" viewBox="0 0 8 8"><path d="M0.5 0 L7.5 4 L0.5 8Z" fill="#2a8fcc"/></svg></div><div class="ic" style="left:806.6px;top:316.62px"><svg width="10" height="10" viewBox="0 0 10 10"><path d="M0.2 9.3 L0.6 7.4 L6.6 1.6 L7.9 2.9 L1.9 8.9Z" fill="#2a8fcc"/><path d="M7.3 0.9 L8 0.3 L9.3 1.6 L8.6 2.3Z" fill="#2a8fcc"/></svg></div><div class="ic" style="left:823.8px;top:317.62px"><svg width="10" height="8" viewBox="0 0 10 8"><circle cx="1.8" cy="1.8" r="1.3" fill="none" stroke="#b03cc8" stroke-width="1"/><circle cx="1.8" cy="6.2" r="1.3" fill="none" stroke="#b03cc8" stroke-width="1"/><path d="M2.8 2.4 L9.5 6.8 M2.8 5.6 L9.5 1.2" stroke="#b03cc8" stroke-width="1.1"/></svg></div><div class="ic" style="left:841.7px;top:316.92px"><svg width="9" height="10" viewBox="0 0 9 10"><path d="M7.2 1.5 L1.5 4.8 L7.2 8.1" fill="none" stroke="#1a9080" stroke-width="0.8"/><circle cx="7.2" cy="1.4" r="1.3" fill="#1a9080"/><circle cx="1.4" cy="4.8" r="1.3" fill="#1a9080"/><circle cx="7.2" cy="8.2" r="1.3" fill="#1a9080"/></svg></div><div class="ic" style="left:862px;top:317.72px"><svg width="3" height="9" viewBox="0 0 3 9"><rect x="0.3" y="0.2" width="1.7" height="1.6" fill="#555"/><rect x="0.3" y="3.3" width="1.7" height="1.6" fill="#555"/><rect x="0.3" y="6.4" width="1.7" height="1.6" fill="#555"/></svg></div><div class="tog" style="top:316.32px"><i></i></div><div class="chk" style="top:317.12px"></div><div class="thumb" style="top:344.39px"><svg width="43.1" height="24.3" viewBox="0 0 43 24" preserveAspectRatio="none"><defs><filter id="f7" x="0" y="0" width="1" height="1"><feGaussianBlur stdDeviation="0.5" edgeMode="duplicate"/></filter></defs><g filter="url(#f7)"><rect width="43" height="24" fill="#d6c6ae"/><rect width="43" height="4" fill="#9a8066"/><path d="M0 4 L43 6 L43 7 L0 5Z" fill="#7a6450"/><rect x="0" y="5" width="5" height="19" fill="#c8b49a"/><rect x="9" y="6.5" width="12" height="7" fill="#88bef0"/><rect x="12" y="8" width="6" height="4" fill="#a890d0" opacity=".6"/><rect x="31" y="9" width="3" height="5" fill="#b09a90" opacity=".7"/><rect x="36" y="9" width="4" height="5" fill="#b8a898" opacity=".7"/><rect x="5" y="15" width="38" height="9" fill="#3a3030"/><rect x="8" y="14" width="30" height="2" fill="#6a5a50"/><rect x="27" y="12" width="2.5" height="6" fill="#c03030"/><rect x="10" y="20" width="25" height="3" fill="#5a4a40" opacity=".7"/></g></svg></div><span class="t" style="left:198.70px;top:342.71px;font-size:8.6px;font-weight:400;color:#1f1f1f;transform:scaleX(0.9520);transform-origin:0 0;-webkit-text-stroke:0.1px #1f1f1f">Roma | I geologi chiedono certificato per l&#x27;attestazione dei rischi naturali degli edifici</span><div class="ic" style="left:198.6px;top:356.39px"><svg width="6" height="6" viewBox="0 0 6 6"><path d="M0.4 3.4 A2.6 2.6 0 0 1 5.6 3.4 L5.6 4 L0.4 4Z" fill="#8c8c8c"/><circle cx="1.6" cy="3" r=".55" fill="#fff"/><circle cx="3" cy="2.2" r=".55" fill="#fff"/><circle cx="4.4" cy="3" r=".55" fill="#fff"/><circle cx="1.9" cy="5.1" r=".8" fill="#7a7a7a"/><circle cx="4.1" cy="5.1" r=".8" fill="#7a7a7a"/></svg></div><span class="t" style="left:206.70px;top:356.76px;font-size:6.3px;font-weight:400;color:#469fd4;transform:scaleX(0.9050);transform-origin:0 0;">VIDEO NEWS</span><div class="ic" style="left:198.8px;top:365.59px"><svg width="6" height="5" viewBox="0 0 6 5"><rect x="0.2" y="0.3" width="3.2" height="0.9" fill="#9a9a9a"/><rect x="0.2" y="2" width="3.2" height="0.9" fill="#9a9a9a"/><rect x="0.2" y="3.7" width="2.2" height="0.9" fill="#9a9a9a"/><path d="M3.4 2.4 L5.8 3.8 L3.4 5Z" fill="#8a8a8a"/></svg></div><span class="t" style="left:206.80px;top:365.10px;font-size:6.6px;font-weight:400;color:#b043c8;transform:scaleX(0.8600);transform-origin:0 0;">SICILIA</span><span class="t" style="left:595.10px;top:352.37px;font-size:7.7px;font-weight:400;color:#6b7280;transform:translateX(-50%) scaleX(0.9000);transform-origin:50% 0;">44.0 MB</span><span class="t" style="left:640.70px;top:352.37px;font-size:7.7px;font-weight:400;color:#6b7280;transform:translateX(-50%) scaleX(0.9000);transform-origin:50% 0;">00:02:31</span><span class="t" style="left:676.80px;top:352.37px;font-size:7.7px;font-weight:400;color:#6b7280;transform:translateX(-50%) scaleX(0.9000);transform-origin:50% 0;">0</span><span class="t" style="left:727.50px;top:352.20px;font-size:7.9px;font-weight:400;color:#6b7280;transform:translateX(-50%) scaleX(0.9000);transform-origin:50% 0;">06/02/2026 15:31</span><div class="ic" style="left:772.4px;top:352.29px"><svg width="9" height="9" viewBox="0 0 9 9"><rect x="0.2" y="3.8" width="1.8" height="4.8" rx=".5" fill="#f6a94a"/><rect x="3.2" y="2.2" width="1.8" height="6.4" rx=".5" fill="#f6a94a"/><rect x="6.1" y="0.1" width="1.8" height="8.5" rx=".5" fill="#f6a94a"/></svg></div><div class="ic" style="left:790.2px;top:353.09px"><svg width="8" height="8" viewBox="0 0 8 8"><path d="M0.5 0 L7.5 4 L0.5 8Z" fill="#2a8fcc"/></svg></div><div class="ic" style="left:806.6px;top:351.79px"><svg width="10" height="10" viewBox="0 0 10 10"><path d="M0.2 9.3 L0.6 7.4 L6.6 1.6 L7.9 2.9 L1.9 8.9Z" fill="#2a8fcc"/><path d="M7.3 0.9 L8 0.3 L9.3 1.6 L8.6 2.3Z" fill="#2a8fcc"/></svg></div><div class="ic" style="left:823.8px;top:352.79px"><svg width="10" height="8" viewBox="0 0 10 8"><circle cx="1.8" cy="1.8" r="1.3" fill="none" stroke="#b03cc8" stroke-width="1"/><circle cx="1.8" cy="6.2" r="1.3" fill="none" stroke="#b03cc8" stroke-width="1"/><path d="M2.8 2.4 L9.5 6.8 M2.8 5.6 L9.5 1.2" stroke="#b03cc8" stroke-width="1.1"/></svg></div><div class="ic" style="left:841.7px;top:352.09px"><svg width="9" height="10" viewBox="0 0 9 10"><path d="M7.2 1.5 L1.5 4.8 L7.2 8.1" fill="none" stroke="#1a9080" stroke-width="0.8"/><circle cx="7.2" cy="1.4" r="1.3" fill="#1a9080"/><circle cx="1.4" cy="4.8" r="1.3" fill="#1a9080"/><circle cx="7.2" cy="8.2" r="1.3" fill="#1a9080"/></svg></div><div class="ic" style="left:862px;top:352.89px"><svg width="3" height="9" viewBox="0 0 3 9"><rect x="0.3" y="0.2" width="1.7" height="1.6" fill="#555"/><rect x="0.3" y="3.3" width="1.7" height="1.6" fill="#555"/><rect x="0.3" y="6.4" width="1.7" height="1.6" fill="#555"/></svg></div><div class="tog" style="top:351.49px"><i></i></div><div class="chk" style="top:352.29px"></div><div class="thumb" style="top:379.56px"><svg width="43.1" height="24.3" viewBox="0 0 43 24" preserveAspectRatio="none"><defs><filter id="f8" x="0" y="0" width="1" height="1"><feGaussianBlur stdDeviation="0.5" edgeMode="duplicate"/></filter></defs><g filter="url(#f8)"><rect width="43" height="24" fill="#767676"/><rect width="43" height="9" fill="#8a9292"/><rect y="1" width="32" height="4" fill="#3a4444"/><rect x="8" y="3" width="3" height="7" fill="#404848"/><rect x="22" y="4" width="3" height="6" fill="#404848"/><rect x="0" y="6" width="6" height="6" fill="#d0d4d4"/><path d="M25 11 Q28 6 43 6 L43 21 L26 21Z" fill="#5a7090"/><path d="M27 10 Q31 8 43 8 L43 12 L28 12Z" fill="#8aa0b8" opacity=".6"/><rect x="36" width="7" height="7" fill="#304870"/><rect y="20" width="43" height="4" fill="#6a6a6a"/></g></svg></div><span class="t" style="left:198.70px;top:377.88px;font-size:8.6px;font-weight:400;color:#1f1f1f;transform:scaleX(0.9350);transform-origin:0 0;-webkit-text-stroke:0.1px #1f1f1f">Palermo | Arresti dei Falchi tra la Vucciria, Ballarò e la Zisa</span><div class="ic" style="left:198.6px;top:391.56px"><svg width="6" height="6" viewBox="0 0 6 6"><path d="M0.4 3.4 A2.6 2.6 0 0 1 5.6 3.4 L5.6 4 L0.4 4Z" fill="#8c8c8c"/><circle cx="1.6" cy="3" r=".55" fill="#fff"/><circle cx="3" cy="2.2" r=".55" fill="#fff"/><circle cx="4.4" cy="3" r=".55" fill="#fff"/><circle cx="1.9" cy="5.1" r=".8" fill="#7a7a7a"/><circle cx="4.1" cy="5.1" r=".8" fill="#7a7a7a"/></svg></div><span class="t" style="left:206.70px;top:391.93px;font-size:6.3px;font-weight:400;color:#469fd4;transform:scaleX(0.9050);transform-origin:0 0;">VIDEO NEWS</span><div class="ic" style="left:198.8px;top:400.76px"><svg width="6" height="5" viewBox="0 0 6 5"><rect x="0.2" y="0.3" width="3.2" height="0.9" fill="#9a9a9a"/><rect x="0.2" y="2" width="3.2" height="0.9" fill="#9a9a9a"/><rect x="0.2" y="3.7" width="2.2" height="0.9" fill="#9a9a9a"/><path d="M3.4 2.4 L5.8 3.8 L3.4 5Z" fill="#8a8a8a"/></svg></div><span class="t" style="left:206.80px;top:400.27px;font-size:6.6px;font-weight:400;color:#b043c8;transform:scaleX(0.8600);transform-origin:0 0;">SICILIA</span><span class="t" style="left:595.10px;top:387.54px;font-size:7.7px;font-weight:400;color:#6b7280;transform:translateX(-50%) scaleX(0.9000);transform-origin:50% 0;">17.5 MB</span><span class="t" style="left:640.70px;top:387.54px;font-size:7.7px;font-weight:400;color:#6b7280;transform:translateX(-50%) scaleX(0.9000);transform-origin:50% 0;">00:01:00</span><span class="t" style="left:676.80px;top:387.54px;font-size:7.7px;font-weight:400;color:#6b7280;transform:translateX(-50%) scaleX(0.9000);transform-origin:50% 0;">6</span><span class="t" style="left:727.50px;top:387.37px;font-size:7.9px;font-weight:400;color:#6b7280;transform:translateX(-50%) scaleX(0.9000);transform-origin:50% 0;">06/02/2026 15:31</span><div class="ic" style="left:772.4px;top:387.46px"><svg width="9" height="9" viewBox="0 0 9 9"><rect x="0.2" y="3.8" width="1.8" height="4.8" rx=".5" fill="#f6a94a"/><rect x="3.2" y="2.2" width="1.8" height="6.4" rx=".5" fill="#f6a94a"/><rect x="6.1" y="0.1" width="1.8" height="8.5" rx=".5" fill="#f6a94a"/></svg></div><div class="ic" style="left:790.2px;top:388.26px"><svg width="8" height="8" viewBox="0 0 8 8"><path d="M0.5 0 L7.5 4 L0.5 8Z" fill="#2a8fcc"/></svg></div><div class="ic" style="left:806.6px;top:386.96px"><svg width="10" height="10" viewBox="0 0 10 10"><path d="M0.2 9.3 L0.6 7.4 L6.6 1.6 L7.9 2.9 L1.9 8.9Z" fill="#2a8fcc"/><path d="M7.3 0.9 L8 0.3 L9.3 1.6 L8.6 2.3Z" fill="#2a8fcc"/></svg></div><div class="ic" style="left:823.8px;top:387.96px"><svg width="10" height="8" viewBox="0 0 10 8"><circle cx="1.8" cy="1.8" r="1.3" fill="none" stroke="#b03cc8" stroke-width="1"/><circle cx="1.8" cy="6.2" r="1.3" fill="none" stroke="#b03cc8" stroke-width="1"/><path d="M2.8 2.4 L9.5 6.8 M2.8 5.6 L9.5 1.2" stroke="#b03cc8" stroke-width="1.1"/></svg></div><div class="ic" style="left:841.7px;top:387.26px"><svg width="9" height="10" viewBox="0 0 9 10"><path d="M7.2 1.5 L1.5 4.8 L7.2 8.1" fill="none" stroke="#1a9080" stroke-width="0.8"/><circle cx="7.2" cy="1.4" r="1.3" fill="#1a9080"/><circle cx="1.4" cy="4.8" r="1.3" fill="#1a9080"/><circle cx="7.2" cy="8.2" r="1.3" fill="#1a9080"/></svg></div><div class="ic" style="left:862px;top:388.06px"><svg width="3" height="9" viewBox="0 0 3 9"><rect x="0.3" y="0.2" width="1.7" height="1.6" fill="#555"/><rect x="0.3" y="3.3" width="1.7" height="1.6" fill="#555"/><rect x="0.3" y="6.4" width="1.7" height="1.6" fill="#555"/></svg></div><div class="tog" style="top:386.66px"><i></i></div><div class="chk" style="top:387.46px"></div><div class="thumb" style="top:414.73px"><svg width="43.1" height="24.3" viewBox="0 0 43 24" preserveAspectRatio="none"><defs><filter id="f9" x="0" y="0" width="1" height="1"><feGaussianBlur stdDeviation="0.5" edgeMode="duplicate"/></filter></defs><g filter="url(#f9)"><rect width="43" height="24" fill="#1e140e"/><rect y="0" width="43" height="2.5" fill="#050403"/><rect y="3" width="43" height="4" fill="#3e3c36"/><rect x="2" y="4" width="38" height="1" fill="#a8a49a" opacity=".6"/><rect y="8.5" width="22" height="2.5" fill="#c8c0b4"/><rect x="22" y="7.5" width="21" height="3" fill="#6a6864"/><rect y="12" width="43" height="10" fill="#3a2414"/><rect x="2" y="13" width="9" height="2" fill="#8a5a30"/><rect x="14" y="14" width="5" height="2" fill="#c89060"/><rect x="25" y="13.5" width="10" height="2" fill="#7a4a28"/><rect x="5" y="17" width="6" height="2" fill="#6a3a1a"/><rect x="19" y="18" width="5" height="3" fill="#e0b040"/><rect x="30" y="17" width="8" height="2" fill="#8a5020"/><rect y="22" width="43" height="2" fill="#0e0a06"/></g></svg></div><span class="t" style="left:198.70px;top:413.05px;font-size:8.6px;font-weight:400;color:#1f1f1f;transform:scaleX(0.9350);transform-origin:0 0;-webkit-text-stroke:0.1px #1f1f1f">Palermo | Droga e un fucile in un locale all&#x27;Olivella, un arresto</span><div class="ic" style="left:198.6px;top:426.73px"><svg width="6" height="6" viewBox="0 0 6 6"><path d="M0.4 3.4 A2.6 2.6 0 0 1 5.6 3.4 L5.6 4 L0.4 4Z" fill="#8c8c8c"/><circle cx="1.6" cy="3" r=".55" fill="#fff"/><circle cx="3" cy="2.2" r=".55" fill="#fff"/><circle cx="4.4" cy="3" r=".55" fill="#fff"/><circle cx="1.9" cy="5.1" r=".8" fill="#7a7a7a"/><circle cx="4.1" cy="5.1" r=".8" fill="#7a7a7a"/></svg></div><span class="t" style="left:206.70px;top:427.10px;font-size:6.3px;font-weight:400;color:#469fd4;transform:scaleX(0.9050);transform-origin:0 0;">VIDEO NEWS</span><div class="ic" style="left:198.8px;top:435.93px"><svg width="6" height="5" viewBox="0 0 6 5"><rect x="0.2" y="0.3" width="3.2" height="0.9" fill="#9a9a9a"/><rect x="0.2" y="2" width="3.2" height="0.9" fill="#9a9a9a"/><rect x="0.2" y="3.7" width="2.2" height="0.9" fill="#9a9a9a"/><path d="M3.4 2.4 L5.8 3.8 L3.4 5Z" fill="#8a8a8a"/></svg></div><span class="t" style="left:206.80px;top:435.44px;font-size:6.6px;font-weight:400;color:#b043c8;transform:scaleX(0.8600);transform-origin:0 0;">SICILIA</span><span class="t" style="left:595.10px;top:422.71px;font-size:7.7px;font-weight:400;color:#6b7280;transform:translateX(-50%) scaleX(0.9000);transform-origin:50% 0;">32.1 MB</span><span class="t" style="left:640.70px;top:422.71px;font-size:7.7px;font-weight:400;color:#6b7280;transform:translateX(-50%) scaleX(0.9000);transform-origin:50% 0;">00:01:50</span><span class="t" style="left:676.80px;top:422.71px;font-size:7.7px;font-weight:400;color:#6b7280;transform:translateX(-50%) scaleX(0.9000);transform-origin:50% 0;">1</span><span class="t" style="left:727.50px;top:422.54px;font-size:7.9px;font-weight:400;color:#6b7280;transform:translateX(-50%) scaleX(0.9000);transform-origin:50% 0;">06/02/2026 15:30</span><div class="ic" style="left:772.4px;top:422.63px"><svg width="9" height="9" viewBox="0 0 9 9"><rect x="0.2" y="3.8" width="1.8" height="4.8" rx=".5" fill="#f6a94a"/><rect x="3.2" y="2.2" width="1.8" height="6.4" rx=".5" fill="#f6a94a"/><rect x="6.1" y="0.1" width="1.8" height="8.5" rx=".5" fill="#f6a94a"/></svg></div><div class="ic" style="left:790.2px;top:423.43px"><svg width="8" height="8" viewBox="0 0 8 8"><path d="M0.5 0 L7.5 4 L0.5 8Z" fill="#2a8fcc"/></svg></div><div class="ic" style="left:806.6px;top:422.13px"><svg width="10" height="10" viewBox="0 0 10 10"><path d="M0.2 9.3 L0.6 7.4 L6.6 1.6 L7.9 2.9 L1.9 8.9Z" fill="#2a8fcc"/><path d="M7.3 0.9 L8 0.3 L9.3 1.6 L8.6 2.3Z" fill="#2a8fcc"/></svg></div><div class="ic" style="left:823.8px;top:423.13px"><svg width="10" height="8" viewBox="0 0 10 8"><circle cx="1.8" cy="1.8" r="1.3" fill="none" stroke="#b03cc8" stroke-width="1"/><circle cx="1.8" cy="6.2" r="1.3" fill="none" stroke="#b03cc8" stroke-width="1"/><path d="M2.8 2.4 L9.5 6.8 M2.8 5.6 L9.5 1.2" stroke="#b03cc8" stroke-width="1.1"/></svg></div><div class="ic" style="left:841.7px;top:422.43px"><svg width="9" height="10" viewBox="0 0 9 10"><path d="M7.2 1.5 L1.5 4.8 L7.2 8.1" fill="none" stroke="#1a9080" stroke-width="0.8"/><circle cx="7.2" cy="1.4" r="1.3" fill="#1a9080"/><circle cx="1.4" cy="4.8" r="1.3" fill="#1a9080"/><circle cx="7.2" cy="8.2" r="1.3" fill="#1a9080"/></svg></div><div class="ic" style="left:862px;top:423.23px"><svg width="3" height="9" viewBox="0 0 3 9"><rect x="0.3" y="0.2" width="1.7" height="1.6" fill="#555"/><rect x="0.3" y="3.3" width="1.7" height="1.6" fill="#555"/><rect x="0.3" y="6.4" width="1.7" height="1.6" fill="#555"/></svg></div><div class="tog" style="top:421.83px"><i></i></div><div class="chk" style="top:422.63px"></div><div class="abs" style="left:207.4px;top:454.2px;width:48px;height:14px;background:#fff;border:0.7px solid #dfe2e6;border-radius:3px"></div><div class="abs" style="left:475px;top:454px;width:16px;height:14px;background:#2490c8;border-radius:3px"></div><div class="abs" style="left:495.6px;top:454px;width:15.3px;height:14px;background:#fff;border:0.7px solid #dfe2e6;border-radius:3px"></div><div class="abs" style="left:516px;top:454px;width:15.3px;height:14px;background:#fff;border:0.7px solid #dfe2e6;border-radius:3px"></div><div class="abs" style="left:536.3px;top:454px;width:15.3px;height:14px;background:#fff;border:0.7px solid #dfe2e6;border-radius:3px"></div><div class="abs" style="left:556.4px;top:454px;width:15.3px;height:14px;background:#fff;border:0.7px solid #dfe2e6;border-radius:3px"></div><div class="abs" style="left:601.7px;top:454px;width:15.3px;height:14px;background:#fff;border:0.7px solid #dfe2e6;border-radius:3px"></div></body></html>
